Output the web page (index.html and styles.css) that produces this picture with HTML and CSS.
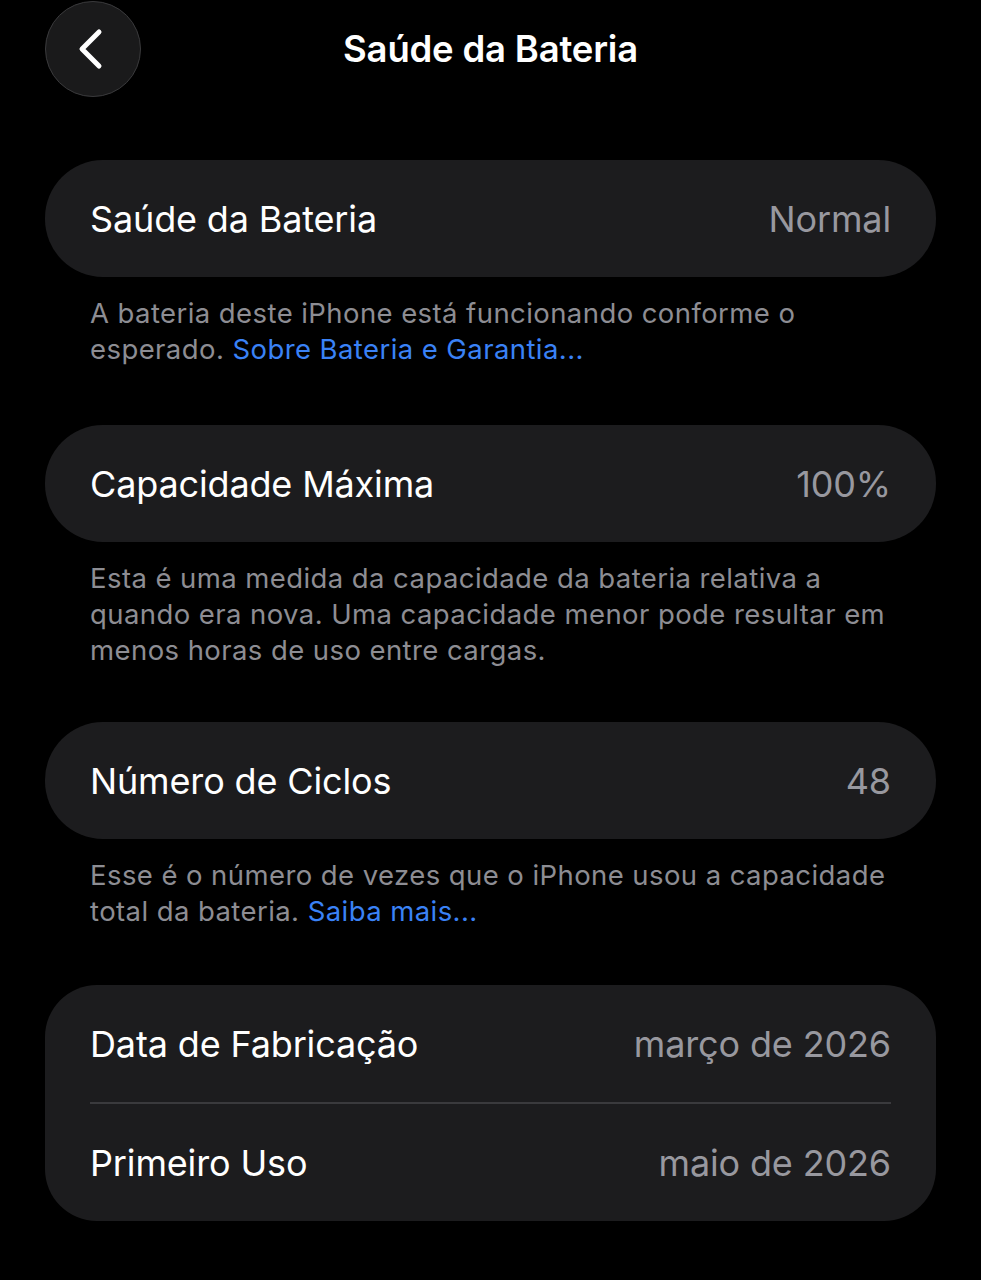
FILE: index.html
```html
<!DOCTYPE html>
<html lang="pt-BR">
<head>
<meta charset="utf-8">
<title>Saúde da Bateria</title>
<link rel="stylesheet" href="styles.css">
</head>
<body>
<div class="screen">
  <header class="nav">
    <button class="back" aria-label="Voltar">
      <svg width="30" height="42" viewBox="0 0 30 42"><path d="M24 4 L7 21 L24 38" fill="none" stroke="#fff" stroke-width="5" stroke-linecap="round" stroke-linejoin="round"/></svg>
    </button>
    <h1 class="title">Saúde da Bateria</h1>
  </header>

  <section class="group group-a">
    <div class="card">
      <div class="row"><span class="label">Saúde da Bateria</span><span class="value">Normal</span></div>
    </div>
    <p class="note">A bateria deste iPhone está funcionando conforme o esperado. <a class="link">Sobre Bateria e Garantia...</a></p>
  </section>

  <section class="group group-b">
    <div class="card">
      <div class="row"><span class="label">Capacidade Máxima</span><span class="value">100%</span></div>
    </div>
    <p class="note">Esta é uma medida da capacidade da bateria relativa a quando era nova. Uma capacidade menor pode resultar em menos horas de uso entre cargas.</p>
  </section>

  <section class="group">
    <div class="card">
      <div class="row"><span class="label">Número de Ciclos</span><span class="value">48</span></div>
    </div>
    <p class="note">Esse é o número de vezes que o iPhone usou a capacidade total da bateria. <a class="link">Saiba mais...</a></p>
  </section>

  <section class="group">
    <div class="card card-list">
      <div class="row"><span class="label">Data de Fabricação</span><span class="value">março de 2026</span></div>
      <div class="divider"></div>
      <div class="row"><span class="label">Primeiro Uso</span><span class="value">maio de 2026</span></div>
    </div>
  </section>
</div>
</body>
</html>
```

FILE: styles.css
```css
* { box-sizing: border-box; }
html, body {
  margin: 0;
  padding: 0;
  background: #000;
}
body {
  font-family: Inter, "Noto Sans", "Liberation Sans", sans-serif;
  color: #fff;
  width: 981px;
  height: 1280px;
  overflow: hidden;
}
.screen {
  padding: 1px 45px 0 45px;
}
.nav {
  position: relative;
  display: flex;
  align-items: center;
  height: 96px;
}
.back {
  width: 96px;
  height: 96px;
  border-radius: 50%;
  background: #1a1a1b;
  border: 1.5px solid #3a3a3c;
  display: flex;
  align-items: center;
  justify-content: center;
  padding: 0 6px 0 0;
  margin: 0;
  cursor: pointer;
}
.title {
  position: absolute;
  left: 0;
  right: 0;
  top: 0;
  bottom: 0;
  margin: 0;
  display: flex;
  align-items: center;
  justify-content: center;
  font-size: 36.5px;
  font-weight: 600;
  letter-spacing: -0.2px;
  pointer-events: none;
}
.nav + .group { margin-top: 63px; }
.group { margin-bottom: 56px; }
.group-a { margin-bottom: 58px; }
.group-b { margin-bottom: 54px; }
.card {
  background: #1c1c1e;
  border-radius: 58px;
  padding: 0 45px;
}
.card-list { border-radius: 52px; }
.row {
  height: 117px;
  display: flex;
  align-items: center;
  justify-content: space-between;
  font-size: 36px;
  letter-spacing: -0.15px;
}
.label { color: #fff; }
.value { color: #98989f; }
.divider {
  height: 2px;
  background: #3a3a3d;
}
.note {
  margin: 18px 45px 0 45px;
  font-size: 27.5px;
  line-height: 36px;
  color: #8d8d93;
  letter-spacing: 0.42px;
}
.link { color: #3a82f6; text-decoration: none; }
```
